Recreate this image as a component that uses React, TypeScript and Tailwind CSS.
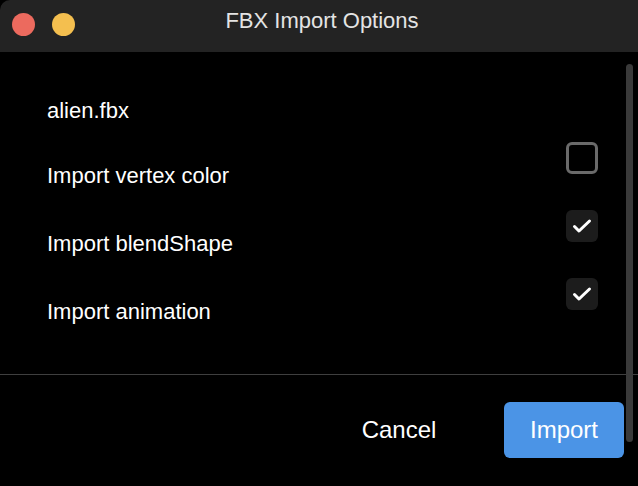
import React, { useState } from "react"

type OptionKey = "vertexColor" | "blendShape" | "animation"

interface ImportOption {
	key: OptionKey
	label: string
}

const options: ImportOption[] = [
	{ key: "vertexColor", label: "Import vertex color" },
	{ key: "blendShape", label: "Import blendShape" },
	{ key: "animation", label: "Import animation" },
]

function CheckBox({ checked, onToggle }: { checked: boolean; onToggle: () => void }): React.ReactNode {
	return (
		<button
			type="button"
			onClick={onToggle}
			className={
				checked
					? "w-[32px] h-[32px] shrink-0 rounded-[6px] bg-[#1c1c1c] flex items-center justify-center"
					: "w-[32px] h-[32px] shrink-0 rounded-[6px] border-[3px] border-[#6a6a6a] bg-black"
			}
		>
			{checked && (
				<svg width="32" height="32" viewBox="0 0 32 32" fill="none">
					<path
						d="M8.5 16.5 L13 21 L23.5 11"
						stroke="#ffffff"
						strokeWidth="3"
						strokeLinecap="round"
						strokeLinejoin="round"
					/>
				</svg>
			)}
		</button>
	)
}

export default function App(): React.ReactNode {
	const [values, setValues] = useState<Record<OptionKey, boolean>>({
		vertexColor: false,
		blendShape: true,
		animation: true,
	})

	const toggle = (key: OptionKey): void => setValues((v) => ({ ...v, [key]: !v[key] }))

	return (
		<div
			className="relative w-full h-[486px] overflow-hidden bg-black flex flex-col text-white"
			style={{ fontFamily: '"Liberation Sans", Arial, sans-serif' }}
		>
			{/* title bar */}
			<div className="h-[52px] shrink-0 bg-[#232323] rounded-tl-[10px] grid grid-cols-[1fr_auto_1fr] items-center">
				<div className="flex items-center gap-[17px] pl-[12px] pb-[4px]">
					<span className="w-[23px] h-[23px] rounded-full bg-[#ec6a5e]" />
					<span className="w-[23px] h-[23px] rounded-full bg-[#f4bf4f]" />
				</div>
				<div className="text-[22px] leading-[26px] text-[#e4e4e4] pb-[10px] pl-[6px]">FBX Import Options</div>
				<div />
			</div>

			{/* options */}
			<div className="flex-1 flex flex-col pl-[47px] pr-[40px] pt-[46px]">
				<div className="text-[22px] leading-[26px] h-[26px] mb-[18px]">alien.fbx</div>
				<div className="flex flex-col gap-[21px]">
					{options.map((option): React.ReactNode => (
						<div key={option.key} className="flex justify-between items-start h-[47px]">
							<span className="text-[22px] leading-[26px] mt-[21px]">{option.label}</span>
							<CheckBox checked={values[option.key]} onToggle={(): void => toggle(option.key)} />
						</div>
					))}
				</div>
			</div>

			{/* footer */}
			<div className="h-[112px] shrink-0 border-t border-[#3f3f3f] flex justify-end items-start pt-[27px] pr-[14px] gap-[45px]">
				<button type="button" className="w-[120px] h-[56px] text-[24px] text-white">
					Cancel
				</button>
				<button type="button" className="w-[120px] h-[56px] rounded-[6px] bg-[#4b94e6] text-[24px] text-white">
					Import
				</button>
			</div>

			{/* scroll indicator */}
			<div className="absolute left-[626px] top-[64px] w-[7px] h-[378px] rounded-full bg-[#3a3a3a]" />
		</div>
	)
}
